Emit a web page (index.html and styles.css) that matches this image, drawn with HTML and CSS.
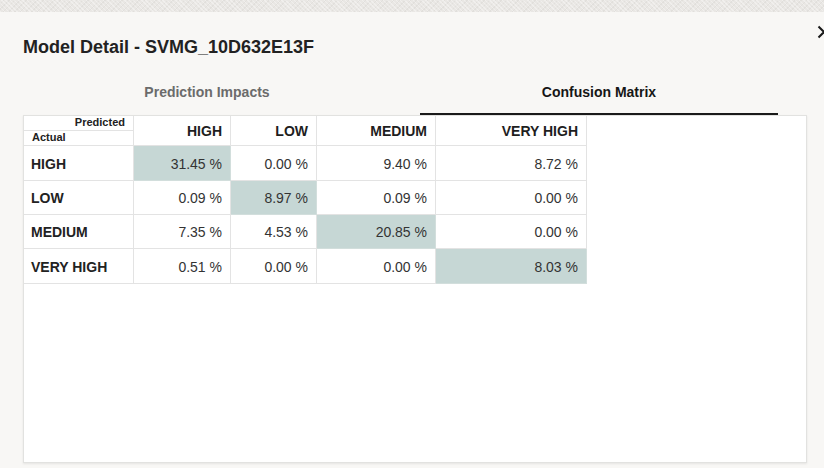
FILE: index.html
```html
<!DOCTYPE html>
<html lang="en">
<head>
<meta charset="utf-8">
<title>Model Detail</title>
<link rel="stylesheet" href="styles.css">
</head>
<body>
<div class="topband"></div>
<div class="dialog">
  <button class="close" aria-label="Close">
    <svg width="14" height="14" viewBox="0 0 14 14"><path d="M1.5 1.5 L12.5 12.5 M12.5 1.5 L1.5 12.5" stroke="#1a1a1a" stroke-width="2" fill="none"/></svg>
  </button>
  <h1 class="title">Model Detail - SVMG_10D632E13F</h1>
  <div class="tabs">
    <div class="tab tab-first">Prediction Impacts</div>
    <div class="tab tab-active">Confusion Matrix</div>
  </div>
  <div class="panel">
    <div class="matrix">
      <div class="cell corner">
        <div class="corner-pred">Predicted</div>
        <div class="corner-act">Actual</div>
      </div>
      <div class="cell head">HIGH</div>
      <div class="cell head">LOW</div>
      <div class="cell head">MEDIUM</div>
      <div class="cell head">VERY HIGH</div>

      <div class="cell label">HIGH</div>
      <div class="cell val diag">31.45 %</div>
      <div class="cell val">0.00 %</div>
      <div class="cell val">9.40 %</div>
      <div class="cell val">8.72 %</div>

      <div class="cell label">LOW</div>
      <div class="cell val">0.09 %</div>
      <div class="cell val diag">8.97 %</div>
      <div class="cell val">0.09 %</div>
      <div class="cell val">0.00 %</div>

      <div class="cell label">MEDIUM</div>
      <div class="cell val">7.35 %</div>
      <div class="cell val">4.53 %</div>
      <div class="cell val diag">20.85 %</div>
      <div class="cell val">0.00 %</div>

      <div class="cell label">VERY HIGH</div>
      <div class="cell val">0.51 %</div>
      <div class="cell val">0.00 %</div>
      <div class="cell val">0.00 %</div>
      <div class="cell val diag">8.03 %</div>
    </div>
  </div>
</div>
</body>
</html>
```

FILE: styles.css
```css
* { box-sizing: border-box; }

html, body {
  margin: 0;
  height: 100%;
}

body {
  background: #f8f7f5;
  font-family: "Liberation Sans", Arial, sans-serif;
  color: #222;
  overflow: hidden;
}

.topband {
  height: 12px;
  background-color: #e9e7e4;
  background-image:
    repeating-linear-gradient(45deg, rgba(255,255,255,0.35) 0 1px, transparent 1px 3px),
    repeating-linear-gradient(-45deg, rgba(210,208,204,0.35) 0 1px, transparent 1px 4px);
}

.dialog {
  position: relative;
  padding: 25px 17px 0 23px;
}

.close {
  position: absolute;
  top: 13px;
  right: -7px;
  width: 14px;
  height: 14px;
  padding: 0;
  border: 0;
  background: none;
}

.close svg { display: block; }

.title {
  margin: 0 0 12px;
  font-size: 18px;
  line-height: 21px;
  font-weight: bold;
  color: #222;
}

.tabs {
  display: flex;
  height: 45px;
}

.tab {
  padding-top: 14px;
  font-size: 14px;
  line-height: 16px;
  font-weight: bold;
  text-align: center;
  color: #6b6b6b;
}

.tab-first {
  width: 368px;
}

.tab-active {
  margin-left: 29px;
  width: 358px;
  color: #161616;
  border-bottom: 2px solid #1a1a1a;
}

.panel {
  height: 348px;
  background: #fff;
  border: 1px solid #e2e2e0;
  box-shadow: 0 1px 2px rgba(0,0,0,0.08);
}

.matrix {
  display: grid;
  grid-template-columns: 110px 97px 86px 119px 151px;
  grid-template-rows: 30px 35px 34px 34px 35px;
  width: 563px;
}

.cell {
  border-right: 1px solid #e3e3e3;
  border-bottom: 1px solid #e3e3e3;
  display: flex;
  align-items: center;
  font-size: 14px;
  line-height: 16px;
}

.corner {
  flex-direction: column;
  align-items: stretch;
  font-size: 11px;
  line-height: 13px;
  font-weight: bold;
  color: #222;
}

.corner-pred {
  height: 15px;
  padding: 0 8px 0 0;
  text-align: right;
  border-bottom: 1px solid #e3e3e3;
}

.corner-act {
  padding: 0 0 0 8px;
}

.head {
  justify-content: flex-end;
  padding-right: 8px;
  font-weight: bold;
  color: #1e1e1e;
}

.label {
  padding-left: 7px;
  padding-top: 1px;
  font-weight: bold;
  color: #222;
}

.val {
  justify-content: flex-end;
  padding-right: 8px;
  padding-top: 1px;
  color: #333;
}

.diag {
  background: #c6d7d5;
  border-color: #d2dedc;
}
```
